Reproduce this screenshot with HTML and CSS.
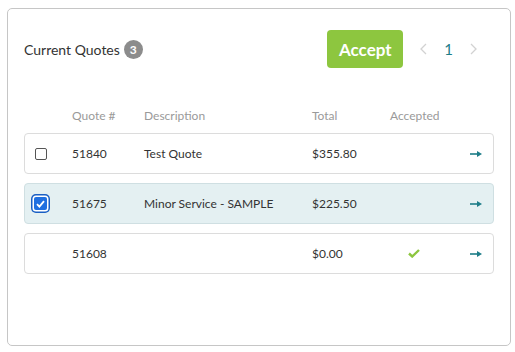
FILE: index.html
```html
<!DOCTYPE html>
<html lang="en">
<head>
  <meta charset="UTF-8">
  <title>Current Quotes</title>
  <link rel="stylesheet" href="styles.css">
</head>
<body>

<div class="card">
  <div class="card-head">
    <h3 class="title">Current Quotes <span class="badge">3</span></h3>
    <button class="btn-accept">Accept</button>
    <div class="pager">
      <svg class="chev" width="7" height="12" viewBox="0 0 7 12"><polyline points="6,1 1,6 6,11" fill="none" stroke="#d2d2d2" stroke-width="1.3"/></svg>
      <span class="page">1</span>
      <svg class="chev" width="7" height="12" viewBox="0 0 7 12"><polyline points="1,1 6,6 1,11" fill="none" stroke="#d2d2d2" stroke-width="1.3"/></svg>
    </div>
  </div>

  <div class="cols">
    <span></span>
    <span>Quote #</span>
    <span>Description</span>
    <span>Total</span>
    <span>Accepted</span>
    <span></span>
  </div>

  <div class="row">
    <span><span class="box"></span></span>
    <span>51840</span>
    <span>Test Quote</span>
    <span>$355.80</span>
    <span></span>
    <span class="go"><svg width="12" height="6" viewBox="0 0 12 6"><path d="M0 3h8" stroke="#1d7d88" stroke-width="1.6"/><path d="M7 0l5 3-5 3z" fill="#1d7d88"/></svg></span>
  </div>

  <div class="row selected">
    <span><span class="box checked"><svg width="9" height="8" viewBox="0 0 9 8"><path d="M1 4.2l2.4 2.4L8 1.2" fill="none" stroke="#fff" stroke-width="1.8"/></svg></span></span>
    <span>51675</span>
    <span>Minor Service - SAMPLE</span>
    <span>$225.50</span>
    <span></span>
    <span class="go"><svg width="12" height="6" viewBox="0 0 12 6"><path d="M0 3h8" stroke="#1d7d88" stroke-width="1.6"/><path d="M7 0l5 3-5 3z" fill="#1d7d88"/></svg></span>
  </div>

  <div class="row">
    <span></span>
    <span>51608</span>
    <span></span>
    <span>$0.00</span>
    <span class="ok"><svg width="12" height="9" viewBox="0 0 12 9"><path d="M1 4.5l3.2 3L11 1" fill="none" stroke="#8dc63f" stroke-width="2.4"/></svg></span>
    <span class="go"><svg width="12" height="6" viewBox="0 0 12 6"><path d="M0 3h8" stroke="#1d7d88" stroke-width="1.6"/><path d="M7 0l5 3-5 3z" fill="#1d7d88"/></svg></span>
  </div>
</div>

</body>
</html>
```

FILE: styles.css
```css
body {
  margin: 8px 0 0 7px;
  font-family: Lato, "Open Sans", sans-serif;
  color: #333;
  background: #fff;
}
.card {
  box-sizing: border-box;
  width: 504px;
  height: 338px;
  border: 1px solid #c6c6c6;
  border-radius: 5px;
  padding: 21px 16px 0 16px;
}
.card-head {
  display: flex;
  align-items: center;
  height: 38px;
}
.title {
  flex: 1;
  margin: 0;
  font-size: 14px;
  font-weight: normal;
  display: flex;
  align-items: center;
  gap: 4px;
}
.badge {
  display: inline-flex;
  align-items: center;
  justify-content: center;
  width: 19px;
  height: 19px;
  border-radius: 50%;
  background: #8c8c8c;
  color: #fff;
  font-size: 12px;
  font-weight: bold;
}
.btn-accept {
  width: 76px;
  height: 38px;
  border: none;
  border-radius: 4px;
  background: #8dc63f;
  color: #fff;
  font-family: Lato, sans-serif;
  font-size: 17px;
  font-weight: bold;
  padding: 0;
}
.pager {
  display: flex;
  align-items: center;
  gap: 17px;
  margin-left: 17px;
  margin-right: 17px;
}
.page {
  color: #1d7d88;
  font-size: 15px;
}
.cols, .row {
  display: grid;
  grid-template-columns: 48px 72px 168px 78px 1fr 30px;
  align-items: center;
}
.row {
  grid-template-columns: 47px 72px 168px 78px 1fr 29px;
}
.cols {
  margin-top: 40px;
  margin-bottom: 10px;
  height: 15px;
  font-size: 12px;
  color: #9a9a9a;
}
.row {
  box-sizing: border-box;
  height: 41px;
  margin-bottom: 9px;
  border: 1px solid #dcdcdc;
  border-radius: 4px;
  font-size: 12px;
}
.row > span:first-child {
  padding-left: 10px;
  display: flex;
}
.selected {
  background: #e4f0f2;
  border-color: #cfdfe2;
}
.box {
  box-sizing: border-box;
  width: 12px;
  height: 12px;
  border: 1px solid #555;
  border-radius: 2px;
  background: #fff;
  display: flex;
  align-items: center;
  justify-content: center;
}
.box.checked {
  width: 13px;
  height: 13px;
  margin-left: -1px;
  border: none;
  background: #1f6fe0;
  box-shadow: 0 0 0 1.5px #fff, 0 0 0 3px #1a5fc4;
}
.ok {
  padding-left: 18px;
  display: flex;
}
.go {
  display: flex;
  justify-content: flex-end;
  padding-right: 11px;
}
```
